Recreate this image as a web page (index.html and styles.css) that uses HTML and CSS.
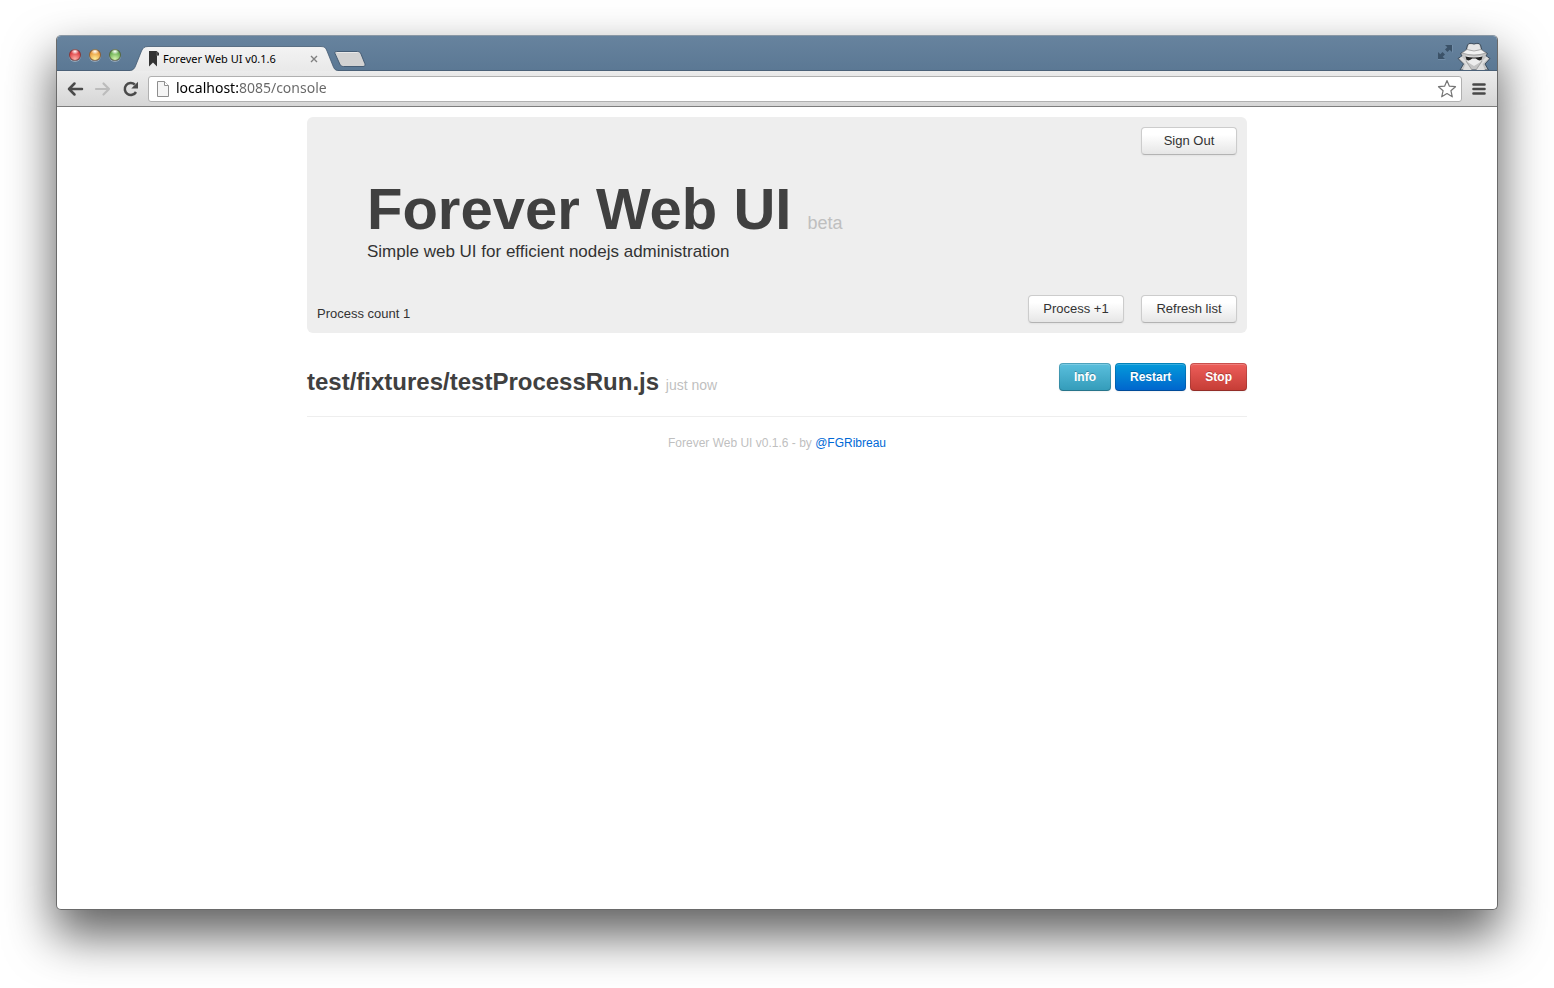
FILE: index.html
```html
<!DOCTYPE html>
<html lang="en">
<head>
<meta charset="utf-8">
<title>Forever Web UI v0.1.6</title>
<link rel="stylesheet" href="styles.css">
</head>
<body>
<div class="window">
  <div class="titlebar">
    <div class="lights">
      <button class="light light-close" type="button" aria-label="Close window"></button>
      <button class="light light-min" type="button" aria-label="Minimize window"></button>
      <button class="light light-zoom" type="button" aria-label="Zoom window"></button>
    </div>
    <div class="tab">
      <svg class="tab-shape" viewBox="0 0 208 25" aria-hidden="true">
        <defs><linearGradient id="tabfill" x1="0" y1="0" x2="0" y2="1"><stop offset="0" stop-color="#f3f3f3"/><stop offset="1" stop-color="#e9e9e9"/></linearGradient></defs>
        <path d="M0 24.500C3 24.500 4.500 22.500 5.500 20L11.500 5C13 1.800 14.500.5 18 .5H191C194.500.5 195.800 1.800 197 5L203 20C204 22.500 205 24.500 208 24.500V25H0Z" fill="url(#tabfill)"/>
        <path d="M0 24.500C3 24.500 4.500 22.500 5.500 20L11.500 5C13 1.800 14.500.5 18 .5H191C194.500.5 195.800 1.800 197 5L203 20C204 22.500 205 24.500 208 24.500" fill="none" stroke="#3f566d" stroke-opacity=".75"/>
      </svg>
      <svg class="favicon" viewBox="0 0 11 16" aria-hidden="true"><path d="M1 0H8.500L11 2V4.500H9V15.500L5 11.500L1 15.500Z" fill="#333"/><path d="M9 1V5" stroke="#777" stroke-width=".7"/></svg>
      <span class="tab-title">Forever Web UI v0.1.6</span>
      <button class="tab-close" type="button" aria-label="Close tab">
        <svg viewBox="0 0 8 8"><path d="M1 1L7 7M7 1L1 7" stroke="#808080" stroke-width="1.400"/></svg>
      </button>
    </div>
    <button class="new-tab" type="button" aria-label="New tab">
      <svg viewBox="0 0 32 16"><path d="M2.500.5H23.500C25.500.5 26.300 1.300 27 3L30.800 12.500C31.400 14.500 31 15.500 29 15.500H9.500C7.500 15.500 6.500 14.700 5.800 13L1 2.500C.5 1.200 1 .5 2.500.5Z" fill="#d2d2d2" stroke="#465d75"/><path d="M3 1.500H23.500" stroke="#e8e8e8"/></svg>
    </button>
    <div class="title-icons">
      <button class="fullscreen" type="button" aria-label="Full screen">
        <svg viewBox="0 0 16 16"><path d="M8 1H15V8L12.700 5.700L10.500 8L8 5.500L10.300 3.300ZM1 8L3.300 10.300L5.500 8L8 10.500L5.700 12.700L8 15H1Z" fill="#3b5268"/><path d="M15.500 1V8.500M1 15.500H8.500" stroke="#86a1ba" stroke-width=".7" opacity=".6"/></svg>
      </button>
      <svg class="incognito" viewBox="0 0 34 28" role="img" aria-label="Incognito">
        <path d="M3 28L6.500 22L1 16.500L5 14L3.500 11.500L9 8.500L10.500 3C11.500 1 14 1 17 2C20 1 22.500 1 23.500 3L25 8.500L30.500 11.500L29 14L33 16.500L28 22L31.500 28Z" fill="#c4c4c4" stroke="#3c4c5c"/>
        <path d="M10.500 8L11.500 3.500C12.500 1.500 15 2.500 17 3C19 2.500 21.500 1.500 22.500 3.500L23.500 8Q17 10 10.500 8Z" fill="#e6e6e6"/>
        <path d="M10 7.500Q17 10.500 24 7.500L29 11Q17 15 5 11Z" fill="#f2f2f2" stroke="#909090" stroke-width=".7"/>
        <path d="M9 13.500Q17 16 25 13.500L23.500 20L17 24L10.500 20Z" fill="#ededed"/>
        <path d="M8.500 14.500Q17 16.500 25.500 14.500L24.500 17.800Q21.500 19.500 18.800 16.600H15.200Q12.500 19.500 9.500 17.800Z" fill="#222"/>
        <path d="M4.500 14.500L9.500 19.500L15 28H6L8.500 22L2.500 16.500ZM29.500 14.500L24.500 19.500L19 28H28L25.500 22L31.500 16.500Z" fill="#dedede"/>
        <path d="M9 19L15 28M25 19L19 28" fill="none" stroke="#969696" stroke-width=".8"/>
      </svg>
    </div>
  </div>

  <div class="toolbar">
    <button class="tool" type="button" aria-label="Back"><svg viewBox="0 0 18 16"><path d="M16 8H3M8.500 2.500L3 8L8.500 13.500" fill="none" stroke="#4a4a4a" stroke-width="2.500" stroke-linecap="round" stroke-linejoin="round"/></svg></button>
    <button class="tool" type="button" aria-label="Forward"><svg viewBox="0 0 18 16"><path d="M2 8H15M9.500 2.500L15 8L9.500 13.500" fill="none" stroke="#bcbcbc" stroke-width="2.200" stroke-linecap="round" stroke-linejoin="round"/></svg></button>
    <button class="tool" type="button" aria-label="Reload"><svg viewBox="0 0 18 16"><path d="M14 11A6 6 0 1 1 12.800 3.500" fill="none" stroke="#4a4a4a" stroke-width="2.500"/><path d="M16 .8V7.500H9.300Z" fill="#4a4a4a"/></svg></button>
    <div class="omnibox">
      <svg class="page-icon" viewBox="0 0 12 16" aria-hidden="true"><path d="M.5.5H7.500L11.500 4.500V15.500H.5Z" fill="#f5f5f5" stroke="#8e8e8e"/><path d="M7.500.5V4.500H11.500" fill="#fff" stroke="#8e8e8e"/></svg>
      <input class="address" type="text" value="localhost:8085/console" aria-label="Address">
      <button class="star" type="button" aria-label="Bookmark"><svg viewBox="0 0 20 20"><path d="M10 1.500L12.400 7.200L18.500 7.700L13.900 11.700L15.300 17.800L10 14.600L4.700 17.800L6.100 11.700L1.500 7.700L7.600 7.200Z" fill="#fff" stroke="#757575" stroke-width="1.200" stroke-linejoin="round"/></svg></button>
    </div>
    <button class="menu" type="button" aria-label="Menu"><svg viewBox="0 0 14 14"><path d="M1.500 2.500H12.500M1.500 7H12.500M1.500 11.500H12.500" stroke="#484848" stroke-width="2.600" stroke-linecap="round"/></svg></button>
  </div>

  <main class="page">
    <div class="container">
      <header class="hero">
        <div class="hero-actions"><button class="btn" type="button">Sign Out</button></div>
        <div class="hero-title">
          <h1>Forever Web UI <small>beta</small></h1>
          <p>Simple web UI for efficient nodejs administration</p>
        </div>
        <div class="hero-foot">
          <span class="count">Process count 1</span>
          <button class="btn" type="button">Process +1</button>
          <button class="btn" type="button">Refresh list</button>
        </div>
      </header>
      <section class="process">
        <h2>test/fixtures/testProcessRun.js <small>just now</small></h2>
        <div class="process-actions">
          <button class="btn-solid info" type="button">Info</button>
          <button class="btn-solid primary" type="button">Restart</button>
          <button class="btn-solid danger" type="button">Stop</button>
        </div>
      </section>
      <footer class="footer">Forever Web UI v0.1.6 - by <a href="#">@FGRibreau</a></footer>
    </div>
  </main>
</div>
</body>
</html>
```
FILE: styles.css
```css
* { box-sizing: border-box; }

body {
  margin: 0;
  min-height: 100vh;
  padding: 35px 56px 78px;
  display: flex;
  background: #fff;
  color: #333;
  font: 13px/18px "Liberation Sans", Arial, sans-serif;
}

button { margin: 0; padding: 0; border: 0; background: none; font: inherit; }
svg { display: block; }

.window {
  flex: 1;
  min-width: 0;
  display: flex;
  flex-direction: column;
  background: #fff;
  border: 1px solid #6a6a6a;
  border-top-color: #8a98a5;
  border-radius: 5px;
  box-shadow: 0 24px 48px 2px rgba(0, 0, 0, .62);
}

.titlebar {
  height: 35px;
  display: flex;
  align-items: flex-end;
  background: linear-gradient(#67839e, #5b7894);
  border-bottom: 1px solid #4b6178;
  border-radius: 4px 4px 0 0;
}

.lights { display: flex; gap: 8px; padding: 0 9px 9px 12px; }

.light {
  width: 12px;
  height: 12px;
  border-radius: 50%;
  border: 1px solid rgba(60, 40, 40, .55);
  box-shadow: 0 1px 0 rgba(255, 255, 255, .35);
}
.light-close { background: radial-gradient(ellipse 4px 3px at 50% 15%, #fff, transparent), radial-gradient(circle at 50% 90%, #ffb0a8, #e04448 65%); }
.light-min { background: radial-gradient(ellipse 4px 3px at 50% 15%, #fff, transparent), radial-gradient(circle at 50% 90%, #fff09a, #ea9f42 65%); }
.light-zoom { background: radial-gradient(ellipse 4px 3px at 50% 15%, #fff, transparent), radial-gradient(circle at 50% 90%, #d3f5ac, #6fb257 65%); }

.tab {
  position: relative;
  width: 208px;
  height: 25px;
  margin-bottom: -1px;
  padding: 0 20px 0 18px;
  display: flex;
  align-items: center;
  gap: 4px;
  color: #000;
  font: 11px/16px "Noto Sans", "Open Sans", sans-serif;
}
.tab-shape { position: absolute; inset: 0; width: 208px; height: 25px; }
.favicon, .tab-title, .tab-close { position: relative; }
.favicon { width: 11px; height: 16px; }
.tab-title { flex: 1; white-space: nowrap; }
.tab-close { width: 8px; height: 8px; }

.new-tab { width: 32px; height: 16px; margin: 0 0 3px -4px; }
.new-tab svg { width: 32px; height: 16px; }

.title-icons { margin-left: auto; display: flex; align-items: flex-end; gap: 4px; padding-right: 6px; }
.fullscreen { width: 16px; height: 16px; margin-bottom: 10px; }
.incognito { width: 34px; height: 28px; }

.toolbar {
  height: 36px;
  display: flex;
  align-items: center;
  padding: 0 11px 0 9px;
  background: linear-gradient(#ececec, #d6d6d6);
  border-bottom: 1px solid #7d7d7d;
}
.tool { width: 18px; height: 16px; margin-right: 10px; }

.omnibox {
  flex: 1;
  min-width: 0;
  height: 26px;
  margin: 0 10px 0 -2px;
  padding: 0 4px 0 8px;
  display: flex;
  align-items: center;
  gap: 7px;
  background: #fff;
  border: 1px solid #b0b0b0;
  border-radius: 3px;
}
.page-icon { width: 12px; height: 16px; }
.address {
  flex: 1;
  min-width: 0;
  height: 22px;
  padding: 0 0 2px;
  border: 0;
  outline: 0;
  font: 14px/20px "Noto Sans", "Open Sans", sans-serif;
  color: transparent;
  background: linear-gradient(to right, #000 62px, #666 62px);
  background-clip: text;
}
.star, .star svg { width: 20px; height: 20px; }
.menu, .menu svg { width: 14px; height: 14px; }

.page { flex: 1; padding: 10px 20px; }
.container { max-width: 940px; margin: 0 auto; }

.hero {
  padding: 10px;
  display: flex;
  flex-direction: column;
  background: #eee;
  border-radius: 6px;
}
.hero-actions { display: flex; justify-content: flex-end; }
.hero-title { padding: 24px 50px 31px; }
.hero-title h1 { margin: 0; color: #404040; font-size: 58px; line-height: 60px; }
.hero-title h1 small { color: #bfbfbf; font-size: 18px; font-weight: 400; line-height: 18px; }
.hero-title p { margin: 0; font-size: 17px; line-height: 25px; }
.hero-foot { display: flex; gap: 17px; }
.count { margin-right: auto; padding-top: 10px; }

.btn {
  width: 96px;
  height: 28px;
  border: 1px solid #ccc;
  border-bottom-color: #b3b3b3;
  border-radius: 4px;
  background: linear-gradient(#fff 25%, #e6e6e6);
  box-shadow: inset 0 1px 0 rgba(255, 255, 255, .2), 0 1px 2px rgba(0, 0, 0, .05);
  color: #333;
}

.process {
  margin-top: 30px;
  padding-bottom: 20px;
  display: flex;
  justify-content: space-between;
  border-bottom: 1px solid #eee;
}
.process h2 { margin: 0; padding-top: 5px; color: #404040; font-size: 24px; line-height: 28px; }
.process h2 small { color: #bfbfbf; font-size: 14px; font-weight: 400; line-height: 14px; }
.process-actions { display: flex; gap: 4px; }
.btn-solid {
  height: 28px;
  padding: 0 14px;
  border: 1px solid rgba(0, 0, 0, .15);
  border-bottom-color: rgba(0, 0, 0, .25);
  border-radius: 4px;
  box-shadow: inset 0 1px 0 rgba(255, 255, 255, .2), 0 1px 2px rgba(0, 0, 0, .05);
  color: #fff;
  font-size: 12px;
  font-weight: 700;
  text-shadow: 0 -1px 0 rgba(0, 0, 0, .25);
}
.info { background: linear-gradient(#5bc0de, #339bb9) border-box; }
.primary { background: linear-gradient(#049cdb, #0064cd) border-box; }
.danger { background: linear-gradient(#ee5f5b, #c43c35) border-box; }

.footer { padding-top: 17px; text-align: center; color: #bfbfbf; font-size: 12px; }
.footer a { color: #0069d6; text-decoration: none; }
```
